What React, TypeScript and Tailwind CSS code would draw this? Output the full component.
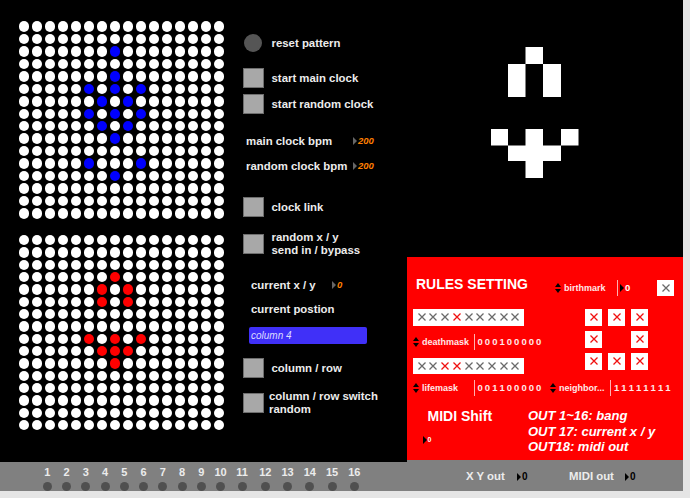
const font = { fontFamily: '"Liberation Sans", Arial, sans-serif' };

const blueCells = ['2:7', '4:7', '5:5', '5:7', '5:9', '6:6', '6:8', '7:5', '7:7', '7:9', '8:6', '8:8', '9:7', '11:5', '11:9', '12:7'];
const redCells = ['3:7', '4:6', '4:8', '5:6', '5:8', '8:5', '8:7', '8:9', '9:6', '9:7', '9:8', '10:7'];
const indexes = Array.from({ length: 16 }, (_, i) => i);

function DotGrid({ cells, on, className }: { cells: string[]; on: string; className: string }) {
  return (
    <div className={`grid grid-cols-[repeat(16,13px)] ${className}`}>
      {indexes.map((r) =>
        indexes.map((c) => (
          <div key={`${r}-${c}`} className="flex items-center justify-center">
            <span className={`h-[10.5px] w-[10.5px] rounded-full ${cells.includes(`${r}:${c}`) ? on : 'bg-white'}`} />
          </div>
        ))
      )}
    </div>
  );
}

function Toggle() {
  return <span className="block h-[20px] w-[21px] shrink-0 border border-[#6e6e6e] bg-[#a8a8a8]" />;
}

function Arrow({ className = 'border-l-[#000]' }: { className?: string }) {
  return <span className={`block h-0 w-0 shrink-0 border-y-[4px] border-l-[4px] border-y-transparent ${className}`} />;
}

function UpDown() {
  return (
    <svg width="6" height="10" viewBox="0 0 6 10" className="shrink-0" aria-hidden="true">
      <path d="M3 0 6 4H0zM3 10 0 6h6z" fill="#000" />
    </svg>
  );
}

function Cross({ red = false }: { red?: boolean }) {
  return (
    <svg width="10" height="10" viewBox="0 0 10 10" aria-hidden="true">
      <path d="M1.5 1.5 8.5 8.5M8.5 1.5 1.5 8.5" stroke={red ? '#f01010' : '#6a6a6a'} strokeWidth="1.3" fill="none" />
    </svg>
  );
}

function CrossBox({ red = false }: { red?: boolean }) {
  return (
    <span className="flex h-[16.5px] w-[17px] items-center justify-center bg-white">
      <Cross red={red} />
    </span>
  );
}

function CrossRow({ reds }: { reds: number[] }) {
  return (
    <div className="grid h-[16.5px] w-[111px] grid-cols-[repeat(9,11.7px)] items-center justify-center bg-white">
      {[0, 1, 2, 3, 4, 5, 6, 7, 8].map((i) => (
        <span key={i} className="flex justify-center">
          <Cross red={reds.includes(i)} />
        </span>
      ))}
    </div>
  );
}

function Divider() {
  return <span className="block h-[16px] w-px shrink-0 bg-[#ffb0b0]" />;
}

function MaskRow({ label, digits, width }: { label: string; digits: string; width: string }) {
  return (
    <div className="flex items-center text-[9px] font-bold text-[#ffe8e8]">
      <UpDown />
      <span className={`ml-[3px] ${width}`}>{label}</span>
      <Divider />
      <span className="ml-[3px] whitespace-nowrap text-[9.5px] [word-spacing:-0.6px]">{digits}</span>
    </div>
  );
}

function Glyph() {
  return (
    <svg width="88" height="132" viewBox="0 0 88 132" className="ml-[84.8px] mt-[47px] block" aria-hidden="true">
      <path d="M34.5 0H52V17H34.5zM17 17H34.5V50H17zM52 17H70V50H52z" fill="#fff" />
      <path d="M0 82H17V98.5H0zM34.5 82H52V98.5H34.5zM70 82H87.5V98.5H70zM17 98.5H70V114H17zM34.5 114H52V131H34.5z" fill="#fff" />
    </svg>
  );
}

export default function App() {
  return (
    <div className="h-[498px] w-[690px] overflow-hidden bg-[#e5e5e5]" style={font}>
      <div className="flex h-[462px] w-[683px] bg-black text-[11.4px] font-bold leading-[14px] text-[#ececec]">
        {/* grids */}
        <div className="w-[243px] shrink-0 pl-[17.5px] pt-[20.5px]">
          <DotGrid cells={blueCells} on="bg-[#0000ff]" className="grid-rows-[repeat(16,12.44px)]" />
          <DotGrid cells={redCells} on="bg-[#ff0000]" className="mt-[14.5px] grid-rows-[repeat(16,12.33px)]" />
        </div>

        {/* controls */}
        <div className="w-[163.5px] shrink-0 pt-[34px]">
          <div className="flex h-[18px] items-center">
            <span className="ml-px h-[18px] w-[18px] shrink-0 rounded-full bg-[#555555]" />
            <span className="ml-[9.5px]">reset pattern</span>
          </div>
          <div className="mt-[16px] flex h-[20px] items-center gap-[7.5px]">
            <Toggle />
            start main clock
          </div>
          <div className="mt-[6px] flex h-[20px] items-center gap-[7.5px]">
            <Toggle />
            start random clock
          </div>
          <div className="ml-[3px] mt-[20px] flex items-center">
            <span className="w-[107px]">main clock bpm</span>
            <Arrow className="border-l-[#666666]" />
            <span className="ml-px text-[9.5px] italic text-[#ff7f00]">200</span>
          </div>
          <div className="ml-[3px] mt-[11px] flex items-center">
            <span className="w-[107px]">random clock bpm</span>
            <Arrow className="border-l-[#666666]" />
            <span className="ml-px text-[9.5px] italic text-[#ff7f00]">200</span>
          </div>
          <div className="mt-[24px] flex h-[20px] items-center gap-[7.5px]">
            <Toggle />
            clock link
          </div>
          <div className="mt-[17px] flex h-[20px] items-center gap-[7.5px]">
            <Toggle />
            <span className="leading-[13px]">
              random x / y
              <br />
              send in / bypass
            </span>
          </div>
          <div className="ml-[8px] mt-[24px] flex items-center">
            <span className="w-[81px]">current x / y</span>
            <Arrow className="border-l-[#666666]" />
            <span className="ml-px text-[9.5px] italic text-[#ff7f00]">0</span>
          </div>
          <div className="ml-[8px] mt-[10px]">current postion</div>
          <div className="ml-[6px] mt-[11px] flex h-[17px] w-[118px] items-center rounded-[2px] bg-[#4030f8] pl-[2px] text-[10px] font-normal italic text-[#dcdcff]">
            column 4
          </div>
          <div className="mt-[13.5px] flex h-[20px] items-center gap-[7.5px]">
            <Toggle />
            column / row
          </div>
          <div className="mt-[15px] flex h-[20px] items-center gap-[5px]">
            <Toggle />
            <span className="leading-[13px]">
              column / row switch
              <br />
              random
            </span>
          </div>
        </div>

        {/* right side */}
        <div className="flex w-[276.5px] flex-col">
          <Glyph />
          <div className="mb-[2px] mt-auto h-[203px] bg-[#ff0000] text-white">
            <div className="ml-[9.5px] mt-[23px] flex h-[16px] items-center">
              <span className="-mt-[8px] w-[139px] text-[14px]">RULES SETTING</span>
              <UpDown />
              <span className="ml-[3px] w-[53px] text-[9px] text-[#ffe8e8]">birthmark</span>
              <Divider />
              <Arrow className="ml-[2px] border-l-[#000]" />
              <span className="ml-px text-[9.5px]">0</span>
              <span className="ml-[27px]">
                <CrossBox />
              </span>
            </div>

            <div className="ml-[6.5px] mt-[13px] flex h-[64.5px]">
              <div className="w-[172px]">
                <CrossRow reds={[3]} />
                <div className="my-[8px] h-[16px]">
                  <MaskRow label="deathmask" digits="0 0 0 1 0 0 0 0 0" width="w-[51.5px]" />
                </div>
                <CrossRow reds={[2, 3]} />
              </div>
              <div className="grid grid-cols-[17px_17px_17px] grid-rows-[16.5px_16.5px_16.5px] gap-x-[6px] gap-y-[5.5px]">
                <CrossBox red />
                <CrossBox red />
                <CrossBox red />
                <CrossBox red />
                <span />
                <CrossBox red />
                <CrossBox red />
                <CrossBox red />
                <CrossBox red />
              </div>
            </div>

            <div className="ml-[6.5px] mt-[6.5px] flex h-[16px] items-center">
              <div className="w-[137px]">
                <MaskRow label="lifemask" digits="0 0 1 1 0 0 0 0 0" width="w-[51.5px]" />
              </div>
              <MaskRow label="neighbor..." digits="1 1 1 1 1 1 1 1" width="w-[51px]" />
            </div>

            <div className="mt-[12px] flex">
              <div className="w-[121.5px]">
                <div className="ml-[21px] mt-[1px] text-[14px]">MIDI Shift</div>
                <div className="ml-[16px] mt-[10px] flex items-center text-[7px]">
                  <Arrow />
                  <span className="ml-px">0</span>
                </div>
              </div>
              <div className="text-[13px] italic leading-[15.5px]">
                <div>OUT 1~16: bang</div>
                <div>OUT 17: current x / y</div>
                <div>OUT18: midi out</div>
              </div>
            </div>
          </div>
        </div>
      </div>

      {/* outlet bar */}
      <div className="flex h-[29px] w-[683px] text-[#ececec]">
        <div className="h-[29px] w-[406.5px] bg-[#808080] pl-[37.7px]">
          <div className="grid grid-cols-[repeat(10,19.25px)_24px_repeat(5,22.25px)] justify-items-center pt-[4px] text-[11px] font-bold leading-[13px]">
            {indexes.map((i) => (
              <div key={i} className="flex flex-col items-center">
                <span>{i + 1}</span>
                <span className="mt-[3px] h-[9px] w-[9px] rounded-full bg-[#505050]" />
              </div>
            ))}
          </div>
        </div>
        <div className="-mt-[2px] flex h-[31px] flex-1 items-center bg-[#808080] pt-[2px] text-[11.4px] font-bold">
          <span className="ml-[59.5px] w-[51px]">X Y out</span>
          <Arrow />
          <span className="ml-px w-[47px] text-[10px] text-black">0</span>
          <span className="w-[56px]">MIDI out</span>
          <Arrow />
          <span className="ml-px text-[10px] text-black">0</span>
        </div>
      </div>
    </div>
  );
}
